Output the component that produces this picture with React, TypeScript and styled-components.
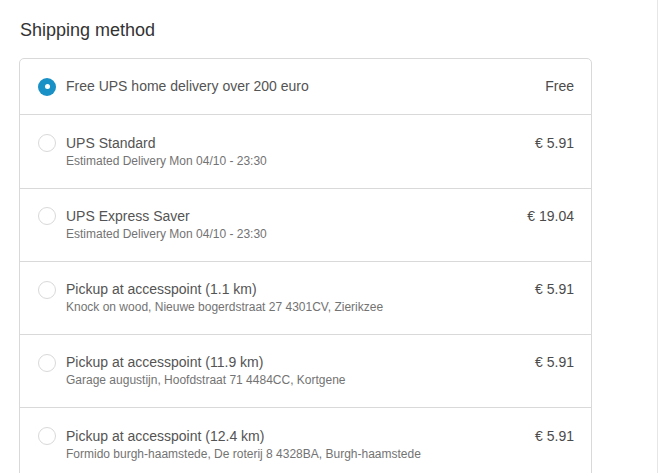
import React, { useState } from "react";
import styled, { createGlobalStyle } from "styled-components";

const GlobalStyle = createGlobalStyle`
  html, body {
    margin: 0;
    padding: 0;
    background: #fff;
    font-family: "Liberation Sans", Arial, sans-serif;
  }
`;

type Method = {
  id: string;
  title: string;
  subtitle?: string;
  price: string;
};

const methods: Method[] = [
  { id: "free", title: "Free UPS home delivery over 200 euro", price: "Free" },
  {
    id: "standard",
    title: "UPS Standard",
    subtitle: "Estimated Delivery Mon 04/10 - 23:30",
    price: "€ 5.91",
  },
  {
    id: "express",
    title: "UPS Express Saver",
    subtitle: "Estimated Delivery Mon 04/10 - 23:30",
    price: "€ 19.04",
  },
  {
    id: "ap1",
    title: "Pickup at accesspoint (1.1 km)",
    subtitle: "Knock on wood, Nieuwe bogerdstraat 27 4301CV, Zierikzee",
    price: "€ 5.91",
  },
  {
    id: "ap2",
    title: "Pickup at accesspoint (11.9 km)",
    subtitle: "Garage augustijn, Hoofdstraat 71 4484CC, Kortgene",
    price: "€ 5.91",
  },
  {
    id: "ap3",
    title: "Pickup at accesspoint (12.4 km)",
    subtitle: "Formido burgh-haamstede, De roterij 8 4328BA, Burgh-haamstede",
    price: "€ 5.91",
  },
];

const Page = styled.div`
  display: flex;
  min-height: 100vh;
`;

const Main = styled.main`
  width: 658px;
  box-sizing: border-box;
  padding: 19px 65px 0 19px;
  border-right: 1px solid #e6e6e6;
`;

const Side = styled.aside`
  flex: 1;
  background: #fff;
`;

const Heading = styled.h2`
  margin: 0 0 16px 1px;
  font-size: 18px;
  line-height: 23px;
  font-weight: normal;
  color: #333;
`;

const List = styled.div`
  border: 1px solid #d9d9d9;
  border-radius: 5px;
  overflow: hidden;
`;

const Row = styled.label`
  display: flex;
  align-items: flex-start;
  padding: 18.25px 17px 18px 18px;
  cursor: pointer;
  & + & {
    border-top: 1px solid #d9d9d9;
  }
`;

const Radio = styled.span<{ $checked: boolean }>`
  flex: none;
  box-sizing: border-box;
  width: 18px;
  height: 18px;
  margin-top: 0.5px;
  margin-right: 10px;
  border-radius: 50%;
  background: ${(p) => (p.$checked ? "#1990c6" : "#fff")};
  border: ${(p) => (p.$checked ? "none" : "1px solid #d9d9d9")};
  display: flex;
  align-items: center;
  justify-content: center;
  &::after {
    content: "";
    display: ${(p) => (p.$checked ? "block" : "none")};
    width: 5px;
    height: 5px;
    border-radius: 50%;
    background: #fff;
  }
`;

const Info = styled.div`
  flex: 1;
  display: flex;
  flex-direction: column;
`;

const Title = styled.span`
  font-size: 14px;
  line-height: 19px;
  color: #545454;
`;

const Subtitle = styled.span`
  font-size: 12px;
  line-height: 17px;
  color: #737373;
`;

const Price = styled.span`
  font-size: 14px;
  line-height: 19px;
  color: #4b4b4b;
  white-space: nowrap;
`;

export default function App() {
  const [selected, setSelected] = useState("free");

  return (
    <>
      <GlobalStyle />
      <Page>
        <Main>
          <Heading>Shipping method</Heading>
          <List>
            {methods.map((m) => (
              <Row key={m.id} onClick={() => setSelected(m.id)}>
                <Radio $checked={selected === m.id} />
                <Info>
                  <Title>{m.title}</Title>
                  {m.subtitle && <Subtitle>{m.subtitle}</Subtitle>}
                </Info>
                <Price>{m.price}</Price>
              </Row>
            ))}
          </List>
        </Main>
        <Side />
      </Page>
    </>
  );
}
